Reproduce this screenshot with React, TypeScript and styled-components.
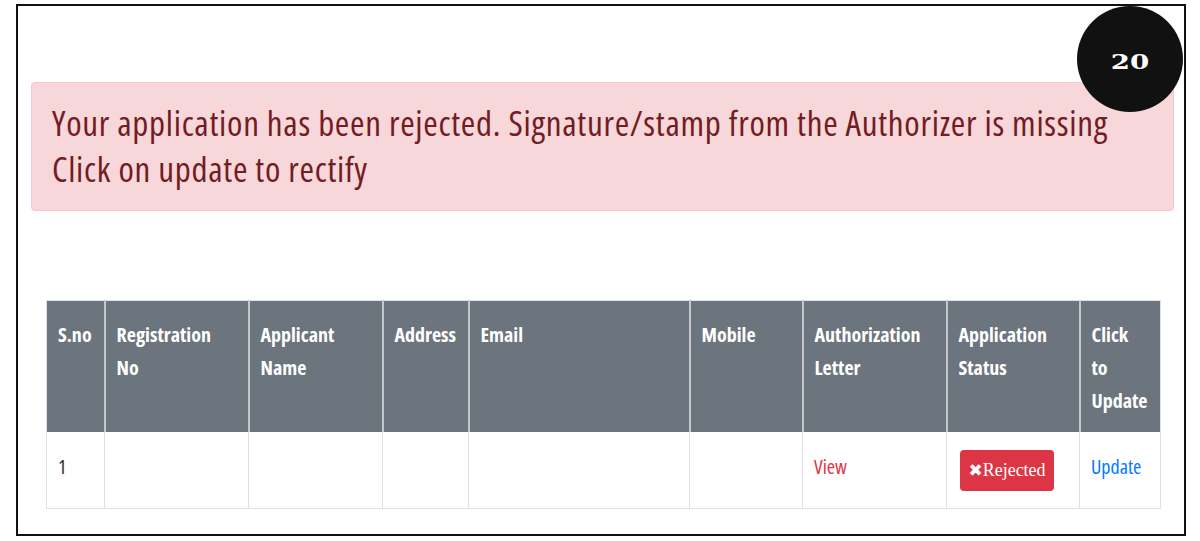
import React from 'react'
import styled, {createGlobalStyle} from 'styled-components'

const GlobalStyle = createGlobalStyle`
  html, body {
    margin: 0;
    padding: 0;
    background: #fff;
  }
  body {
    font-family: "Open Sans", "Noto Sans", "Liberation Sans", sans-serif;
    font-stretch: 75%;
    color: #212529;
  }
`

const Frame = styled.div`
  position: relative;
  box-sizing: border-box;
  width: 1170px;
  height: 532px;
  margin: 4px 0 0 16px;
  border: 2px solid #111;
  padding: 76px 0 0 13px;
`

const Badge = styled.div`
  position: absolute;
  top: 0;
  left: 1059px;
  width: 106px;
  height: 106px;
  border-radius: 50%;
  background: #111;
  display: flex;
  align-items: center;
  justify-content: center;
`

const BadgeText = styled.span`
  font-family: "DejaVu Serif", "Liberation Serif", serif;
  font-stretch: normal;
  font-weight: bold;
  font-size: 20px;
  color: #fff;
  transform: scaleX(1.38);
  margin-top: 5px;
`

const Alert = styled.div`
  box-sizing: border-box;
  width: 1143px;
  padding: 17px 20px 18px;
  background: #f8d7da;
  border: 1px solid #f5c6cb;
  border-radius: 4px;
  color: #721c24;
  font-size: 35px;
  letter-spacing: 0.72px;
  line-height: 46px;
  white-space: nowrap;
`

const TableWrap = styled.div`
  margin: 89px 0 0 15px;
`

const Table = styled.table`
  width: 1114px;
  table-layout: fixed;
  border-collapse: collapse;
  border: 1px solid #dee2e6;
  font-size: 20px;
  line-height: 33px;
`

const HeadCell = styled.th`
  background: #6c757d;
  color: #fff;
  font-weight: bold;
  text-align: left;
  vertical-align: top;
  padding: 17px 11px 15px;
  border-left: 2px solid #c4c8cc;
  &:first-child {
    border-left: none;
  }
`

const Cell = styled.td`
  vertical-align: top;
  padding: 18px 11px 17px;
  border-left: 1px solid #dee2e6;
  height: 41px;
  color: #333;
`

const ViewLink = styled.a`
  color: #dc3545;
  text-decoration: none;
`

const UpdateLink = styled.a`
  color: #007bff;
  text-decoration: none;
`

const RejectedButton = styled.button`
  display: flex;
  align-items: center;
  justify-content: center;
  width: 94px;
  height: 41px;
  margin-left: 2px;
  padding: 0 0 2px;
  border: none;
  border-radius: 4px;
  background: #dc3545;
  color: #fff;
  font-family: "Liberation Serif", "Times New Roman", serif;
  font-size: 18px;
  line-height: 1;
`

const Cross = styled.span`
  font-family: "DejaVu Sans", sans-serif;
  font-size: 17px;
  margin: 2px 0 0 0;
`

const columns = [
  {label: ['S.no'], width: 58},
  {label: ['Registration', 'No'], width: 144},
  {label: ['Applicant', 'Name'], width: 134},
  {label: ['Address'], width: 86},
  {label: ['Email'], width: 221},
  {label: ['Mobile'], width: 113},
  {label: ['Authorization', 'Letter'], width: 144},
  {label: ['Application', 'Status'], width: 133},
  {label: ['Click', 'to', 'Update'], width: 81},
]

export default function App() {
  return (
    <>
      <GlobalStyle/>
      <Frame>
        <Alert>
          Your application has been rejected. Signature/stamp from the Authorizer is missing
          <br/>
          Click on update to rectify
        </Alert>
        <TableWrap>
          <Table>
            <colgroup>
              {columns.map((c, i) => <col key={i} style={{width: c.width}}/>)}
            </colgroup>
            <thead>
            <tr>
              {columns.map((c, i) => (
                <HeadCell key={i}>
                  {c.label.map((l, j) => <div key={j}>{l}</div>)}
                </HeadCell>
              ))}
            </tr>
            </thead>
            <tbody>
            <tr>
              <Cell>1</Cell>
              <Cell/>
              <Cell/>
              <Cell/>
              <Cell/>
              <Cell/>
              <Cell><ViewLink href="#">View</ViewLink></Cell>
              <Cell>
                <RejectedButton><Cross>✖</Cross>Rejected</RejectedButton>
              </Cell>
              <Cell><UpdateLink href="#">Update</UpdateLink></Cell>
            </tr>
            </tbody>
          </Table>
        </TableWrap>
        <Badge><BadgeText>20</BadgeText></Badge>
      </Frame>
    </>
  )
}
